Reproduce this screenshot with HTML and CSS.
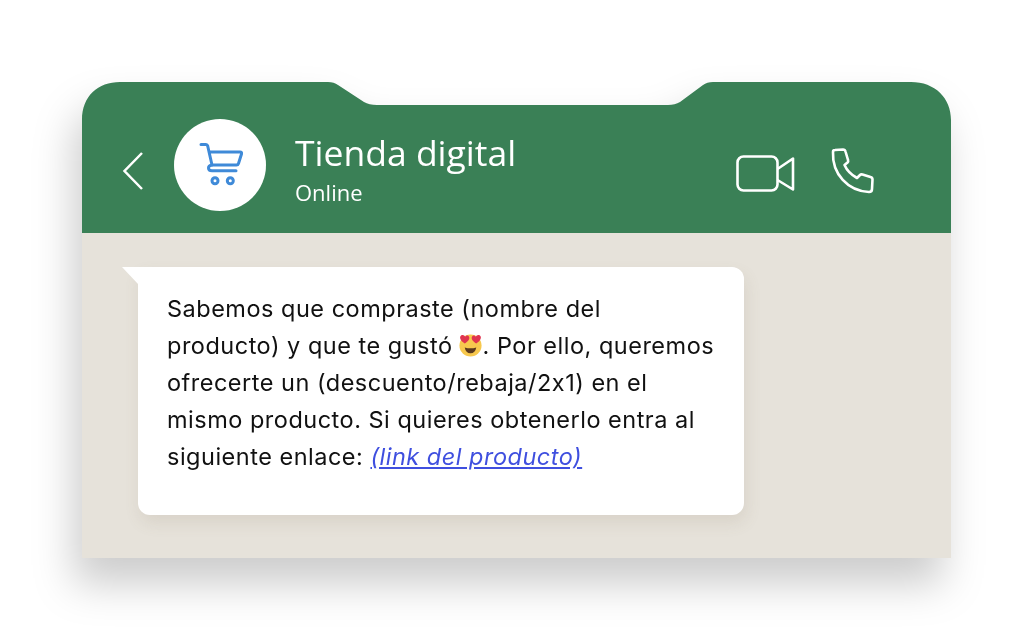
FILE: index.html
```html
<!DOCTYPE html>
<html>
<head>
  <title>Tienda digital</title>
  <meta charset="UTF-8" />
  <link rel="stylesheet" href="styles.css">
</head>
<body>
  <div class="chat">
    <!-- Header with notch -->
    <header class="chat-head">
      <svg class="back" width="22" height="40" viewBox="0 0 22 40">
        <path d="M20 2 L2.500 20 L20 38" />
      </svg>
      <div class="avatar">
        <svg width="44" height="46" viewBox="0 0 44 46">
          <path d="M2 2.500 H7 Q8.300 2.500 8.700 4 L13 23 H37.500 Q39 23 39.500 21.500 L42.500 12 Q43 10 41 10 H10" />
          <path d="M13 23 Q9.500 23.500 9.500 26 Q9.500 28.700 13 28.700 H37" />
          <circle cx="16" cy="38.700" r="3" />
          <circle cx="31.300" cy="38.700" r="3" />
        </svg>
      </div>
      <div class="contact">
        <div class="contact-name">Tienda digital</div>
        <div class="contact-status">Online</div>
      </div>
      <div class="actions">
        <svg class="video" width="59" height="38" viewBox="0 0 59 38">
          <rect x="1.500" y="1.500" width="40" height="34" rx="6" />
          <path d="M41.500 14 L57 3.500 V34.500 L41.500 25" />
        </svg>
        <svg class="phone" width="44" height="46" viewBox="0 0 44 46">
          <path d="M3 4 Q3 2 5 2 L13 1.500 Q15 1.500 15.500 3.500 L18 12 Q18.500 13.500 17.500 14.500 L14.500 17 Q18 25 27 30 L30 27 Q31 26 32.500 26.500 L40.500 29 Q42.500 29.500 42.500 31.500 L42 41 Q42 44 39 44 C18 43 2 26 3 4 Z" />
        </svg>
      </div>
    </header>

    <main class="chat-body">
      <div class="bubble">
        <p>
          Sabemos que compraste (nombre del<br>
          producto) y que te gustó<svg class="emoji" width="25" height="25" viewBox="0 0 26 26">
            <circle cx="13" cy="14" r="11.500" fill="#f7c84e" />
            <path d="M7 16 Q13 18 19 16 Q18 22 13 22 Q8 22 7 16 Z" fill="#5b3a1e" />
            <path d="M7 12 C2 9 1 5 3.500 3.500 C5.500 2.500 7 4 7.500 5 C8.500 3.500 11 3 11.700 5.500 C12.300 8 9.500 10.500 7 12 Z" fill="#e0344f" />
            <path d="M19 12 C24 9 25 5 22.500 3.500 C20.500 2.500 19 4 18.500 5 C17.500 3.500 15 3 14.300 5.500 C13.700 8 16.500 10.500 19 12 Z" fill="#e0344f" />
          </svg>. Por ello, queremos<br>
          ofrecerte un (descuento/rebaja/2x1) en el<br>
          mismo producto. Si quieres obtenerlo entra al<br>
          siguiente enlace: <a class="link" href="#">(link del producto)</a>
        </p>
      </div>
    </main>
  </div>
</body>
</html>
```

FILE: styles.css
```css
body {
  margin: 0;
  padding: 82px 73px 75px 82px;
  background: #fff;
  font-family: "Open Sans", sans-serif;
}

.chat {
  width: 869px;
  filter: drop-shadow(-8px 26px 20px rgba(0, 0, 0, 0.2));
}

.chat-head {
  height: 151px;
  box-sizing: border-box;
  padding: 14px 77px 0 40px;
  display: flex;
  align-items: center;
  background: #3a8056;
  color: #fff;
  clip-path: path("M0 38 C0 14 16 0 38 0 H246 Q252 0 256 3 L282 20 Q287 23 295 23 H586 Q593 23 598 20 L621 3 Q625 0 631 0 H829 C853 0 869 16 869 38 V151 H0 Z");
}

.back {
  fill: none;
  stroke: #fff;
  stroke-width: 2.500;
  margin-top: 12px;
  margin-right: 30px;
}

.avatar {
  width: 92px;
  height: 92px;
  border-radius: 50%;
  background: #fff;
  display: flex;
  align-items: center;
  justify-content: center;
  flex: none;
}

.avatar svg {
  margin-left: 2px;
  fill: none;
  stroke: #3f8ad8;
  stroke-width: 3;
  stroke-linecap: round;
  stroke-linejoin: round;
}

.contact {
  margin-left: 29px;
  margin-top: 9px;
}

.contact-name {
  font-size: 35.500px;
  line-height: 46px;
}

.contact-status {
  font-size: 22px;
  line-height: 34px;
}

.actions {
  margin-left: auto;
  margin-top: 12px;
  display: flex;
  align-items: center;
  gap: 35px;
}

.actions svg {
  fill: none;
  stroke: #fff;
  stroke-width: 2.600;
  stroke-linejoin: round;
}

.video {
  margin-top: 6px;
}

.chat-body {
  height: 325px;
  box-sizing: border-box;
  padding: 34px 0 0 56px;
  background: #e6e2da;
}

.bubble {
  position: relative;
  width: 606px;
  height: 248px;
  box-sizing: border-box;
  padding: 23px 20px 0 29px;
  background: #fff;
  border-radius: 0 12px 12px 12px;
  box-shadow: 2px 8px 16px rgba(120, 105, 80, 0.12);
  color: #111;
  font-family: Inter, sans-serif;
  font-feature-settings: "calt" 0;
  font-size: 23.500px;
  letter-spacing: 0.500px;
  line-height: 37px;
}

/* tail */
.bubble::before {
  content: "";
  position: absolute;
  left: -16px;
  top: 0;
  width: 16px;
  height: 17px;
  background: #fff;
  clip-path: polygon(0 0, 100% 0, 100% 100%);
}

.bubble p {
  margin: 0;
  white-space: nowrap;
}

.emoji {
  vertical-align: -3px;
  margin-left: 5px;
}

.link {
  color: #3f4fdf;
  font-style: italic;
}
```
